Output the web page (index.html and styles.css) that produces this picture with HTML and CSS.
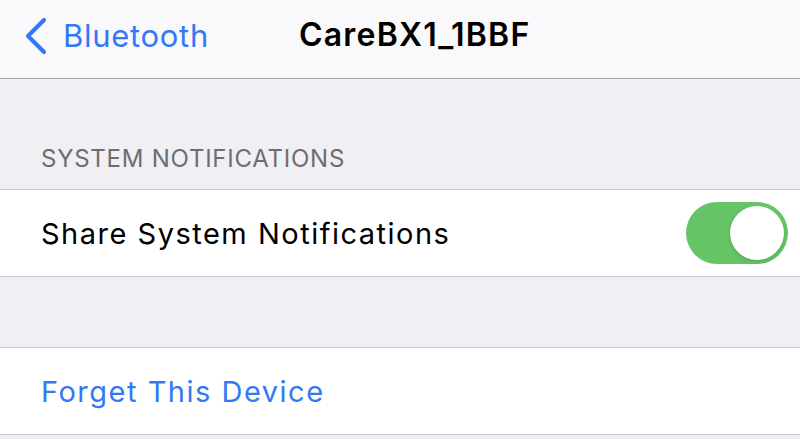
FILE: index.html
```html
<!DOCTYPE html>
<html>
<head>
<meta charset="utf-8">
<link rel="stylesheet" href="styles.css">
</head>
<body>
<div class="screen">
  <header class="nav">
    <div class="back">
      <svg class="chev" width="24" height="38" viewBox="0 0 24 38"><path d="M20 3 L4 19 L20 35" fill="none" stroke="#3478f6" stroke-width="4.2" stroke-linecap="round" stroke-linejoin="round"/></svg>
      <span class="back-label">Bluetooth</span>
    </div>
    <div class="title">CareBX1_1BBF</div>
  </header>
  <div class="section-head">SYSTEM NOTIFICATIONS</div>
  <div class="group">
    <div class="cell">
      <span class="cell-label">Share System Notifications</span>
      <div class="switch on"><div class="knob"></div></div>
    </div>
  </div>
  <div class="spacer"></div>
  <div class="group">
    <div class="cell">
      <span class="cell-label link">Forget This Device</span>
    </div>
  </div>
</div>
</body>
</html>
```
FILE: styles.css
```css
* { box-sizing: border-box; }
html, body { margin: 0; padding: 0; }
body {
  width: 800px;
  height: 439px;
  overflow: hidden;
  background: #efeff4;
  font-family: Inter, "Noto Sans", sans-serif;
}
.screen { display: flex; flex-direction: column; }
.nav {
  height: 79px;
  background: #f9f9fb;
  border-bottom: 1px solid #a9a9ad;
  display: flex;
  align-items: center;
  position: relative;
}
.back {
  display: flex;
  align-items: center;
  padding-left: 24px;
  gap: 15px;
  color: #3478f6;
  margin-top: -7px;
}
.chev { display: block; }
.back-label { font-size: 31px; letter-spacing: 0.7px; }
.title {
  position: absolute;
  left: 299px;
  top: 15px;
  font-size: 32px;
  font-weight: 600;
  letter-spacing: 1.2px;
  color: #000;
}
.section-head {
  height: 110px;
  padding: 0 0 0 41px;
  display: flex;
  align-items: flex-end;
  padding-bottom: 16px;
  font-size: 24px;
  color: #6d6d72;
  letter-spacing: 0.75px;
}
.group {
  background: #fff;
  border-top: 1px solid #c8c7cc;
  border-bottom: 1px solid #c8c7cc;
}
.cell {
  height: 86px;
  display: flex;
  align-items: center;
  justify-content: space-between;
  padding: 0 12px 0 41px;
}
.cell-label { font-size: 29px; letter-spacing: 1.5px; color: #000; }
.cell-label.link { color: #3478f6; }
.switch {
  width: 102px;
  height: 62px;
  border-radius: 31px;
  background: #65c466;
  position: relative;
}
.knob {
  position: absolute;
  right: 4px;
  top: 4px;
  width: 54px;
  height: 54px;
  border-radius: 50%;
  background: #fff;
  box-shadow: 0 2px 4px rgba(0,0,0,0.12);
}
.spacer { height: 70px; }
```
